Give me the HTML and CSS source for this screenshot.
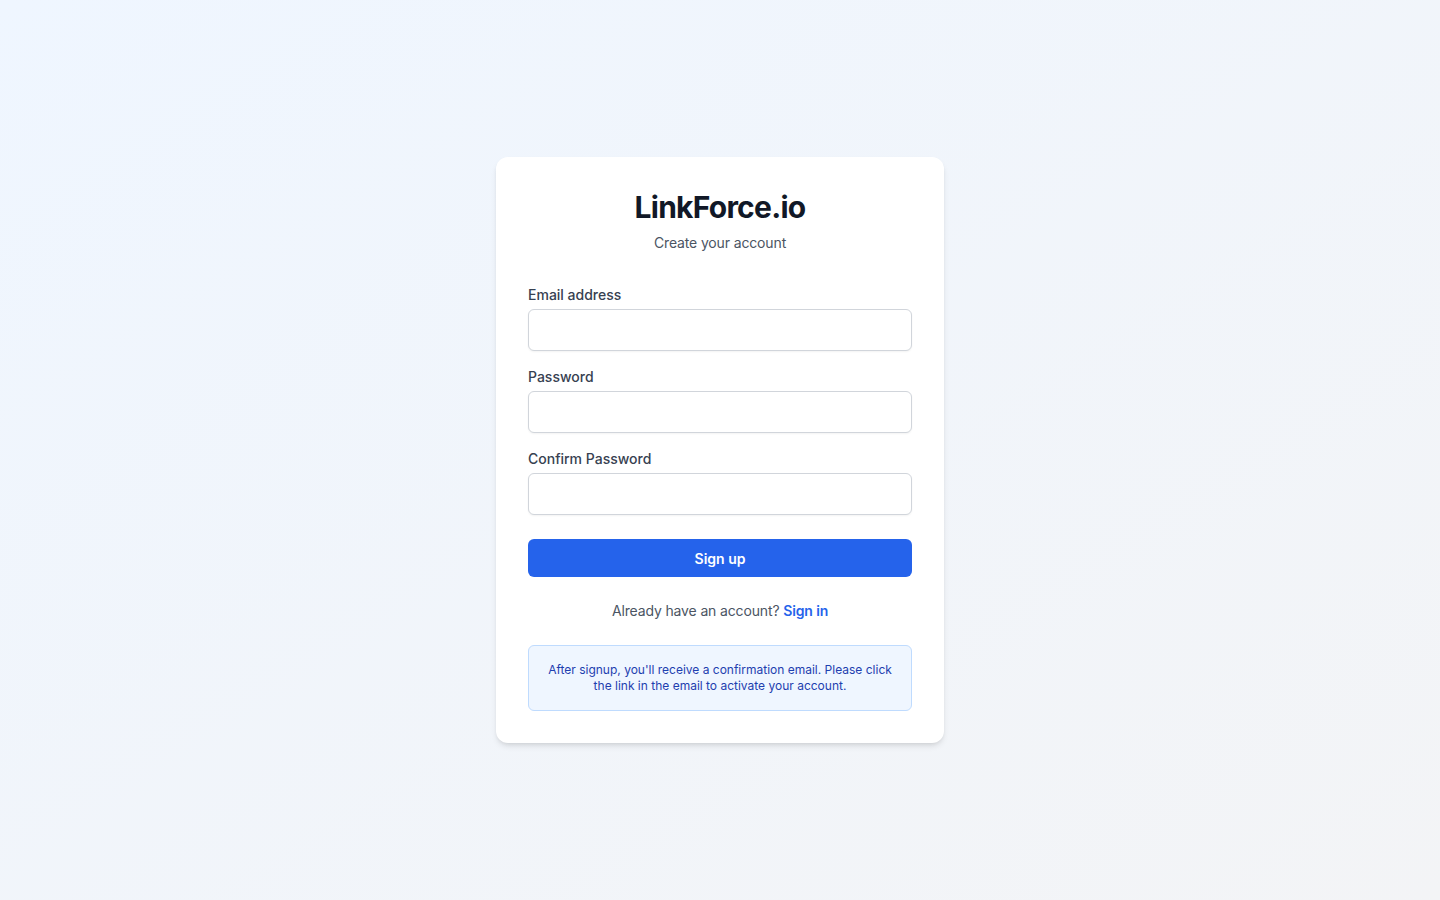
FILE: index.html
```html
<!DOCTYPE html>
<html lang="en">

<head>
  <meta charset="UTF-8">
  <meta name="viewport" content="width=device-width, initial-scale=1.0">
  <title>LinkForce.io - Sign up</title>
  <link rel="stylesheet" href="styles.css">
</head>

<body>
  <div class="page">
    <div class="card">
      <div class="head">
        <h1 class="brand">LinkForce.io</h1>
        <p class="subtitle">Create your account</p>
      </div>

      <form class="form" onsubmit="return false">
        <div class="field">
          <label for="email">Email address</label>
          <input id="email" type="email">
        </div>
        <div class="field">
          <label for="password">Password</label>
          <input id="password" type="password">
        </div>
        <div class="field">
          <label for="confirm">Confirm Password</label>
          <input id="confirm" type="password">
        </div>
        <button class="submit" type="submit">Sign up</button>
      </form>

      <p class="switch">Already have an account? <a href="#">Sign in</a></p>

      <div class="notice">
        After signup, you'll receive a confirmation email. Please click the link in the email to activate your account.
      </div>
    </div>
  </div>
</body>

</html>
```

FILE: styles.css
```css
* {
  box-sizing: border-box;
}

body {
  margin: 0;
  font-family: Inter, "Noto Sans", sans-serif;
  color: #111827;
}

.page {
  min-height: 100vh;
  display: flex;
  align-items: center;
  justify-content: center;
  background: linear-gradient(to bottom right, #eff6ff, #f3f4f6);
}

.card {
  width: 448px;
  padding: 32px;
  background: #fff;
  border-radius: 12px;
  box-shadow: 0 4px 6px -1px rgba(0, 0, 0, 0.1), 0 2px 4px -2px rgba(0, 0, 0, 0.1);
}

.head {
  text-align: center;
}

.brand {
  margin: 0;
  font-size: 30px;
  line-height: 36px;
  font-weight: 700;
  letter-spacing: -0.025em;
  color: #111827;
}

.subtitle {
  margin: 8px 0 0;
  font-size: 14px;
  line-height: 20px;
  letter-spacing: -0.01em;
  color: #4b5563;
}

.form {
  margin-top: 32px;
  display: flex;
  flex-direction: column;
  gap: 16px;
}

.field label {
  display: block;
  margin-bottom: 4px;
  font-size: 14px;
  line-height: 20px;
  font-weight: 500;
  color: #374151;
}

.field input {
  display: block;
  width: 100%;
  height: 42px;
  padding: 8px 12px;
  font-family: inherit;
  font-size: 16px;
  border: 1px solid #d1d5db;
  border-radius: 6px;
  box-shadow: 0 1px 2px rgba(0, 0, 0, 0.05);
  outline: none;
}

.submit {
  margin-top: 8px;
  height: 38px;
  width: 100%;
  border: none;
  border-radius: 6px;
  background: #2563eb;
  color: #fff;
  font-family: inherit;
  font-size: 14px;
  font-weight: 600;
  cursor: pointer;
}

.switch {
  margin: 24px 0 0;
  text-align: center;
  font-size: 14px;
  line-height: 20px;
  letter-spacing: -0.01em;
  color: #4b5563;
}

.switch a {
  color: #2563eb;
  font-weight: 600;
  text-decoration: none;
}

.notice {
  margin-top: 24px;
  padding: 16px;
  background: #eff6ff;
  border: 1px solid #bfdbfe;
  border-radius: 6px;
  text-align: center;
  font-size: 12px;
  line-height: 16px;
  color: #1e40af;
}
```
